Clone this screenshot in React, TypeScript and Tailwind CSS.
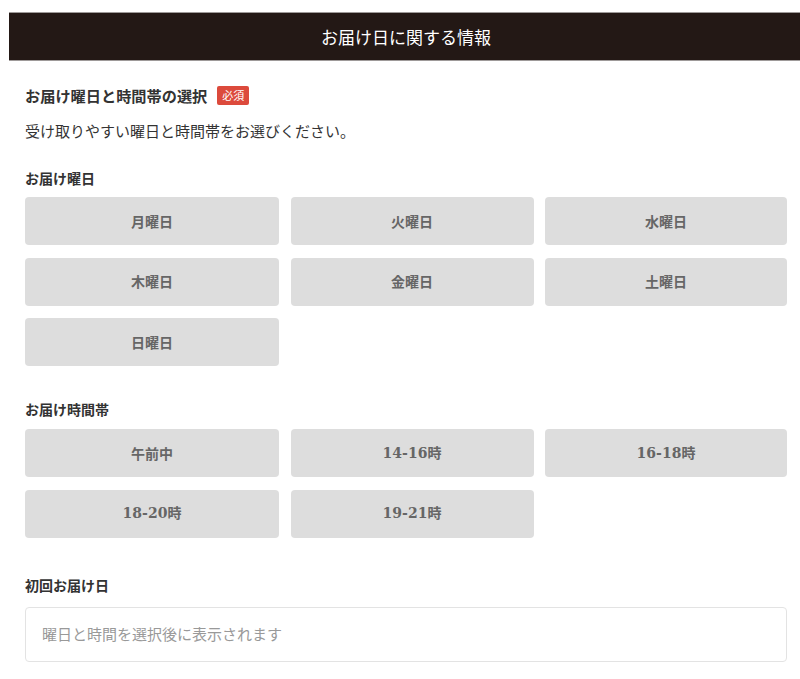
import React from "react";

const days = ["月曜日", "火曜日", "水曜日", "木曜日", "金曜日", "土曜日", "日曜日"];
const times = ["午前中", "14-16時", "16-18時", "18-20時", "19-21時"];

const jp = { fontFamily: '"Noto Sans CJK JP", "Noto Sans", sans-serif' };
const num = { fontFamily: '"DejaVu Serif", "Noto Sans CJK JP", serif' };

function OptionButton({ label, serif }: { label: string; serif?: boolean }) {
    return (
        <button
            type="button"
            className="h-[48px] rounded-[4px] bg-[#dddddd] text-[#666666] text-[14px] font-bold flex items-center justify-center"
            style={serif ? num : jp}
        >
            {label}
        </button>
    );
}

export default function App() {
    return (
        <div className="min-h-screen bg-white" style={jp}>
            <div className="ml-[9px] w-[794px] pt-[12px]">
                {/* Header bar */}
                <div className="h-[49px] bg-[#231815] border-y border-[#9e9a99] flex items-center justify-center text-white text-[17px]">
                    お届け日に関する情報
                </div>

                <div className="px-[16px] pt-[24px] pb-[20px]">
                    <div className="flex items-center h-[20px]">
                        <span className="text-[15.2px] font-bold text-[#333333]">お届け曜日と時間帯の選択</span>
                        <span className="ml-[10px] h-[19px] px-[5px] rounded-[2px] bg-[#dc4a3c] text-white text-[11px] flex items-center">必須</span>
                    </div>
                    <p className="mt-[14px] leading-[24px] text-[15px] text-[#333333]">
                        受け取りやすい曜日と時間帯をお選びください。
                    </p>

                    <div className="mt-[25px] leading-[20px] text-[14px] font-bold text-[#333333]">お届け曜日</div>
                    <div className="mt-[9px] grid grid-cols-[254px_243px_242px] gap-x-[11.5px] gap-y-[12.5px]">
                        {days.map(d => (
                            <OptionButton key={d} label={d} />
                        ))}
                    </div>

                    <div className="mt-[33px] leading-[20px] text-[14px] font-bold text-[#333333]">お届け時間帯</div>
                    <div className="mt-[10px] grid grid-cols-[254px_243px_242px] gap-x-[11.5px] gap-y-[12.5px]">
                        {times.map(t => (
                            <OptionButton key={t} label={t} serif={/\d/.test(t)} />
                        ))}
                    </div>

                    <div className="mt-[37px] leading-[20px] text-[14px] font-bold text-[#333333]">初回お届け日</div>
                    <div className="mt-[12px] h-[55px] rounded-[4px] border border-[#e3e3e3] px-[16px] flex items-center text-[15px] text-[#999999]">
                        曜日と時間を選択後に表示されます
                    </div>
                </div>
            </div>
        </div>
    );
}
